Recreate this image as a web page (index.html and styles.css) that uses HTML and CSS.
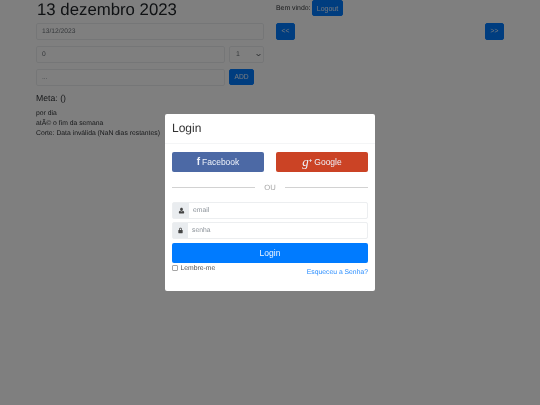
FILE: index.html
```html
<!DOCTYPE html>
<html lang="pt">
<head>
<meta charset="utf-8">
<title>Login</title>
<link rel="stylesheet" href="styles.css">
</head>
<body>
<div class="page">
  <main class="col-left">
    <h1 class="title">13 dezembro 2023</h1>
    <div class="field date">13/12/2023</div>
    <div class="row">
      <div class="field grow">0</div>
      <div class="field select">1<svg class="chev" viewBox="0 0 8 5"><path d="M1 1l3 3 3-3" fill="none" stroke="#44484c" stroke-width="1.5"/></svg></div>
    </div>
    <div class="row">
      <div class="field grow muted">...</div>
      <button class="btn add">ADD</button>
    </div>
    <h2 class="meta">Meta: ()</h2>
    <p class="line">por dia</p>
    <p class="line">atÃ© o fim da semana</p>
    <p class="line">Corte: Data inválida (NaN dias restantes)</p>
  </main>
  <aside class="col-right">
    <div class="welcome"><span>Bem vindo:</span><button class="btn logout">Logout</button></div>
    <div class="nav"><button class="btn arrow">&lt;&lt;</button><button class="btn arrow">&gt;&gt;</button></div>
  </aside>
</div>
<div class="backdrop"></div>
<div class="modal">
  <header class="modal-head">Login</header>
  <section class="modal-body">
    <div class="social">
      <button class="sbtn fb"><span class="fb-f">f</span>Facebook</button>
      <button class="sbtn gg"><span class="gg-g">g<sup>+</sup></span>Google</button>
    </div>
    <div class="or"><span class="or-line"></span><span class="or-text">OU</span><span class="or-line"></span></div>
    <div class="igroup">
      <span class="addon wide"><svg viewBox="0 0 12 12" class="ico"><path d="M6 1.2c1.5 0 2.4 1.1 2.4 2.6S7.500 6.800 6 6.800 3.600 5.300 3.600 3.800 4.500 1.200 6 1.200zM3.500 6.600c.7.6 1.500.9 2.500.9s1.800-.3 2.500-.9c1.200.2 2 1.100 2 2.500v1.100c0 .5-.4.8-.9.8H2.400c-.5 0-.9-.3-.9-.8V9.100c0-1.400.8-2.300 2-2.500z" fill="#444"/></svg></span>
      <span class="ph">email</span>
    </div>
    <div class="igroup">
      <span class="addon"><svg viewBox="0 0 12 12" class="ico"><path d="M3.500 5.200V3.800C3.500 2.300 4.500 1.200 6 1.200s2.500 1.100 2.500 2.600v1.400h.5c.4 0 .7.300.7.700v4.100c0 .4-.3.700-.7.700H3c-.4 0-.7-.3-.7-.7V5.900c0-.4.300-.7.700-.7zm1.300 0h2.400V3.800C7.200 3 6.700 2.500 6 2.500S4.800 3 4.800 3.800z" fill="#444"/></svg></span>
      <span class="ph">senha</span>
    </div>
    <button class="login">Login</button>
    <div class="foot">
      <label class="remember"><span class="check"></span>Lembre-me</label>
      <a class="forgot" href="#">Esqueceu a Senha?</a>
    </div>
  </section>
</div>
</body>
</html>
```
FILE: styles.css
```css
* { box-sizing: border-box; }
html, body { margin: 0; height: 100%; }
body {
  width: 540px;
  height: 405px;
  overflow: hidden;
  background: #fff;
  color: #303336;
  font-family: "Liberation Sans", Arial, sans-serif;
  text-rendering: geometricPrecision;
}
.page { display: flex; padding-left: 36px; gap: 12px; filter: blur(.3px); }
.col-left { width: 228px; flex: none; }
.col-right { width: 228px; flex: none; }
.title { margin: 0 0 4px; font-size: 16.8px; font-weight: 400; line-height: 19px; height: 19px; color: #212529; padding-left: 1px; }
.field {
  height: 17px;
  border: 1px solid #ebedef;
  border-radius: 2px;
  background: #fff;
  color: #6a7076;
  font-size: 6.7px;
  line-height: 15px;
  padding: 0 5px;
}
.date { margin-bottom: 6px; }
.row { display: flex; gap: 4px; margin-bottom: 6px; }
.grow { width: 189px; flex: none; }
.muted { color: #8a9097; }
.select { width: 35px; flex: none; display: flex; align-items: center; justify-content: space-between; font-size: 7px; padding: 0 2px 0 6px; }
.chev { width: 5px; height: 4px; }
.btn {
  border: 1px solid #007bff;
  background: #007bff;
  color: #e6f1ff;
  border-radius: 2px;
  font: 400 6.7px/1 "Liberation Sans", Arial, sans-serif;
  padding: 0;
  height: 17px;
}
.add { width: 25px; height: 16px; }
.meta { margin: 6px 0 5px; font-size: 8.7px; font-weight: 400; line-height: 12px; color: #303336; }
.line { margin: 0; font-size: 6.8px; line-height: 10px; }
.welcome { display: flex; align-items: center; gap: 1.500px; font-size: 6.9px; height: 16px; margin-bottom: 7px; }
.logout { width: 31px; height: 16px; font-size: 7px; }
.nav { display: flex; justify-content: space-between; width: 228px; }
.arrow { width: 19px; }
.backdrop { position: fixed; inset: 0; background: rgba(0, 0, 0, .5); }
.modal {
  position: fixed;
  left: 165px;
  top: 114px;
  width: 210px;
  height: 177px;
  background: #fff;
  border-radius: 2px;
  display: flex;
  flex-direction: column;
  filter: blur(.25px);
}
.modal-head {
  height: 30px;
  padding: 5.500px 7px 0;
  font-size: 12px;
  line-height: 16px;
  color: #333;
  border-bottom: 1px solid #f4f5f6;
}
.modal-body { padding: 8px 7px 0; }
.social { display: flex; justify-content: space-between; }
.sbtn {
  width: 92px;
  height: 20px;
  border: 0;
  border-radius: 2px;
  color: #eef2fa;
  font: 400 8.5px/20px "Liberation Sans", Arial, sans-serif;
  padding: 0;
  display: flex;
  align-items: center;
  justify-content: center;
}
.fb { background: #4c69a5; }
.gg { background: #cb4325; }
.fb-f { font-weight: 700; font-size: 10px; margin-right: 2px; }
.gg-g { font-family: "Liberation Serif", serif; font-style: italic; font-size: 13px; margin-right: 2px; line-height: 12px; }
.gg-g sup { font: 700 6px/0 "Liberation Sans", sans-serif; vertical-align: 4px; }
.or { display: flex; align-items: center; height: 14px; margin-top: 8px; margin-bottom: 8px; color: #a6a6a6; font-size: 7.7px; }
.or-line { flex: 1; height: 1px; background: #d2d2d2; }
.or-text { width: 30px; text-align: center; }
.igroup { display: flex; height: 17px; border: 1px solid #eceef0; border-radius: 2px; margin-bottom: 3px; align-items: stretch; font-size: 6.8px; }
.addon { width: 15px; background: #e9ecef; display: flex; align-items: center; justify-content: center; flex: none; }
.addon.wide { width: 16px; }
.ico { width: 7px; height: 7px; }
.ph { color: #8b9299; line-height: 15px; padding-left: 4px; }
.login {
  display: block;
  width: 100%;
  height: 20px;
  margin-top: 4px;
  border: 0;
  border-radius: 2px;
  background: #007bff;
  color: #eef6ff;
  font: 400 8.5px/20px "Liberation Sans", Arial, sans-serif;
  padding: 0;
}
.foot { display: flex; justify-content: space-between; margin-top: 1px; font-size: 6.8px; }
.remember { display: flex; align-items: center; gap: 3px; height: 8px; color: #555; }
.check { width: 5.500px; height: 5.500px; border: 1px solid #a5a5a5; border-radius: 1px; background: #fff; }
.forgot { color: #2b8eff; text-decoration: none; line-height: 9px; margin-top: 4px; }
```
